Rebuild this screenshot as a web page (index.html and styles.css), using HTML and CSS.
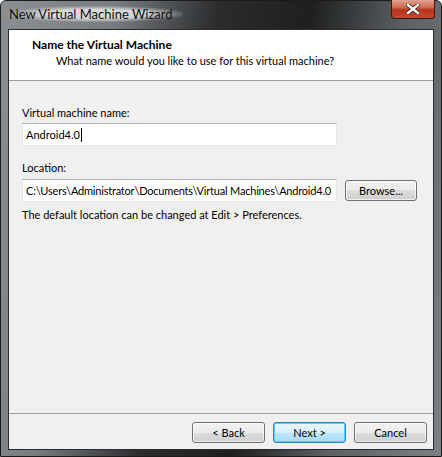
FILE: index.html
```html
<!DOCTYPE html>
<html lang="en">
<head>
    <meta charset="UTF-8">
    <title>New Virtual Machine Wizard</title>
    <link rel="stylesheet" href="styles.css">
</head>
<body>

    <div class="window">
        <div class="titlebar">
            <span class="title">New Virtual Machine Wizard</span>
            <div class="close-btn">
                <svg width="14" height="10" viewBox="0 0 14 10">
                    <path d="M2 1 L12 9 M12 1 L2 9" stroke="#3a1a14" stroke-width="4" stroke-linecap="square"/>
                    <path d="M2 1 L12 9 M12 1 L2 9" stroke="#ffffff" stroke-width="2.4" stroke-linecap="square"/>
                </svg>
            </div>
        </div>

        <div class="client">
            <div class="header">
                <h1>Name the Virtual Machine</h1>
                <p>What name would you like to use for this virtual machine?</p>
            </div>

            <div class="content">
                <label class="field-label">Virtual machine name:</label>
                <div class="textbox name-box">Android4.0<span class="caret"></span></div>

                <label class="field-label location-label">Location:</label>
                <div class="row">
                    <div class="textbox path-box">C:\Users\Administrator\Documents\Virtual Machines\Android4.0</div>
                    <button class="btn browse">Browse...</button>
                </div>

                <p class="hint">The default location can be changed at Edit &gt; Preferences.</p>
            </div>

            <div class="footer">
                <button class="btn">&lt; Back</button>
                <button class="btn default">Next &gt;</button>
                <button class="btn">Cancel</button>
            </div>
        </div>
    </div>

</body>
</html>
```

FILE: styles.css
```css
body {
    margin: 0;
    padding: 0;
    font-family: 'Lato', 'Liberation Sans', sans-serif;
    font-size: 11px;
    color: #000;
    background-color: #fff;
}

.window {
    width: 442px;
    height: 457px;
    box-sizing: border-box;
    display: flex;
    flex-direction: column;
    padding: 0 7px 6px 7px;
    border: 1px solid #1c1c1c;
    border-radius: 6px 6px 0 0;
    background: linear-gradient(100deg, #8c8f92 0%, #7a7d80 22%, #2a2c2e 42%, #1d1f20 60%, #5d6063 78%, #7e8184 100%);
}

.titlebar {
    height: 28px;
    display: flex;
    align-items: flex-start;
    justify-content: space-between;
}

.title {
    margin-top: 5px;
    padding: 0 10px 0 1px;
    font-size: 13px;
    color: #101010;
    background: radial-gradient(ellipse at center, rgba(230, 232, 234, 0.85) 40%, rgba(230, 232, 234, 0) 75%);
}

.close-btn {
    width: 44px;
    height: 19px;
    margin-top: -1px;
    margin-right: -1px;
    box-sizing: border-box;
    border: 1px solid #3a1c16;
    border-top: none;
    border-radius: 0 0 4px 4px;
    background: linear-gradient(#e0a092 0%, #cf6d58 40%, #b8341c 55%, #c24a2e 100%);
    display: flex;
    align-items: center;
    justify-content: center;
}

.client {
    flex: 1;
    display: flex;
    flex-direction: column;
    background-color: #f0f0f0;
    border: 1px solid #2a2c2e;
}

.header {
    height: 51px;
    box-sizing: border-box;
    background-color: #fff;
    border-bottom: 1px solid #a0a0a0;
    padding: 7px 0 0 23px;
}

h1 {
    margin: 0;
    font-size: 12px;
    font-weight: bold;
    line-height: 16px;
}

.header p {
    margin: 0;
    padding-left: 24px;
    line-height: 16px;
}

.content {
    flex: 1;
    display: flex;
    flex-direction: column;
    align-items: flex-start;
    padding: 24px 0 0 13px;
}

.field-label {
    line-height: 16px;
}

.location-label {
    margin-top: 14px;
}

.textbox {
    width: 315px;
    height: 23px;
    box-sizing: border-box;
    background-color: #fff;
    border: 1px solid #e3e9ef;
    border-top-color: #abadb3;
    padding: 0 0 0 3px;
    line-height: 21px;
    white-space: nowrap;
    overflow: hidden;
}

.path-box {
    letter-spacing: -0.2px;
}

.name-box {
    margin-top: 2px;
}

.caret {
    display: inline-block;
    width: 1px;
    height: 14px;
    margin-left: 1px;
    vertical-align: -3px;
    background-color: #000;
}

.row {
    display: flex;
    align-items: center;
    gap: 8px;
    margin-top: 3px;
}

.btn {
    width: 73px;
    height: 21px;
    box-sizing: border-box;
    padding: 0;
    font-family: inherit;
    font-size: 11px;
    color: #000;
    border: 1px solid #707070;
    border-radius: 3px;
    background: linear-gradient(#f2f2f2 0%, #ebebeb 50%, #dddddd 50%, #cfcfcf 100%);
    box-shadow: inset 0 0 0 1px rgba(255, 255, 255, 0.7);
}

.browse {
    width: 72px;
}

.default {
    border-color: #3c7fb1;
    box-shadow: inset 0 0 0 1px #48d8fb;
    background: linear-gradient(#eaf6fd 0%, #d9f0fc 50%, #bee6fd 50%, #a7d9f5 100%);
}

.hint {
    margin: 5px 0 0 0;
    line-height: 16px;
}

.footer {
    height: 36px;
    box-sizing: border-box;
    border-top: 1px solid #a0a0a0;
    display: flex;
    justify-content: flex-end;
    align-items: flex-start;
    gap: 8px;
    padding: 8px 6px 0 0;
}
```
